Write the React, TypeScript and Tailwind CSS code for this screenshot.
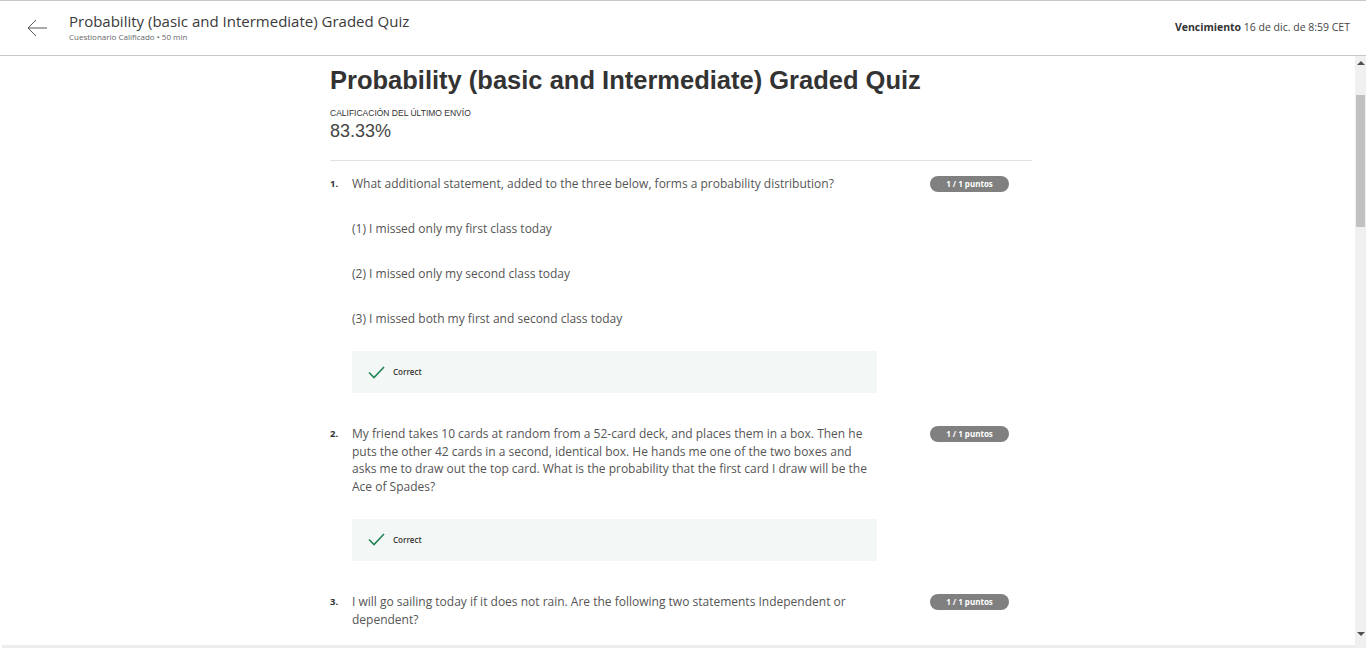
import React from 'react';

const questions = [
  {
    n: '1.',
    text: 'What additional statement, added to the three below, forms a probability distribution?',
    options: [
      '(1) I missed only my first class today',
      '(2) I missed only my second class today',
      '(3) I missed both my first and second class today',
    ],
    correct: true,
  },
  {
    n: '2.',
    text: 'My friend takes 10 cards at random from a 52-card deck, and places them in a box. Then he puts the other 42 cards in a second, identical box. He hands me one of the two boxes and asks me to draw out the top card. What is the probability that the first card I draw will be the Ace of Spades?',
    options: [],
    correct: true,
  },
  {
    n: '3.',
    text: 'I will go sailing today if it does not rain. Are the following two statements Independent or dependent?',
    options: [],
    correct: false,
  },
];

function CheckIcon() {
  return (
    <svg width="17" height="13" viewBox="0 0 17 13" fill="none">
      <path d="M1 6.5 L6 11.5 L16 1" stroke="#1f8354" strokeWidth="1.6" />
    </svg>
  );
}

function Badge() {
  return (
    <span className="flex items-center justify-center w-[79px] h-[16px] rounded-full bg-[#808080] text-white text-[8px] leading-none font-bold font-['Open_Sans',sans-serif]">
      1 / 1 puntos
    </span>
  );
}

export default function App() {
  return (
    <div className="w-[1366px] h-[648px] overflow-hidden bg-white flex flex-col font-['Open_Sans',sans-serif] text-[#555]">
      {/* header */}
      <header className="h-[56px] shrink-0 border-t border-b border-[#c8c8c8] flex items-center">
        <svg className="ml-[27px]" width="21" height="18" viewBox="0 0 21 18" fill="none">
          <path d="M1 9 H20 M9 1 L1 9 L9 17" stroke="#555" strokeWidth="1" />
        </svg>
        <div className="ml-[21px] flex flex-col -mt-[2px]">
          <span className="text-[15px] leading-[19px] text-[#3a3a3a]">Probability (basic and Intermediate) Graded Quiz</span>
          <span className="text-[8px] leading-[11px] text-[#666]">Cuestionario Calificado • 50 min</span>
        </div>
        <div className="ml-auto mr-[16px] text-[10.5px] text-[#444]">
          <span className="font-bold text-[#333]">Vencimiento</span> 16 de dic. de 8:59 CET
        </div>
      </header>

      <div className="flex flex-1 min-h-0">
        <main className="flex-1 min-w-0 overflow-hidden flex flex-col">
          <div className="flex-1 min-h-0 overflow-hidden">
            <div className="ml-[330px] w-[702px] pt-[9px]">
              <h1 className="font-['Liberation_Sans',Arial,sans-serif] font-bold text-[25.5px] leading-[30px] text-[#333]">
                Probability (basic and Intermediate) Graded Quiz
              </h1>
              <div className="mt-[13px] font-['Liberation_Sans',Arial,sans-serif] text-[8.5px] leading-[10px] text-[#333]">
                CALIFICACIÓN DEL ÚLTIMO ENVÍO
              </div>
              <div className="mt-[2px] font-['Liberation_Sans',Arial,sans-serif] text-[18px] leading-[22px] text-[#444]">83.33%</div>
              <div className="mt-[18px] border-t border-[#e2e2e2]" />

              <div className="pt-[14px]">
                {questions.map((q, i) => (
                  <div key={i} className={i === 0 ? '' : 'mt-[32px]'}>
                    <div className="flex items-start">
                      <span className="w-[22px] shrink-0 text-[9.5px] font-bold leading-[18px] text-[#333]">{q.n}</span>
                      <p className="w-[525px] text-[12px] leading-[17.7px] text-[#555]">{q.text}</p>
                      <div className="ml-[53px] pt-[1px] flex">
                        <Badge />
                      </div>
                    </div>
                    {q.options.length > 0 && (
                      <div className="ml-[22px] mt-[27px] flex flex-col gap-[27px]">
                        {q.options.map((o, j) => (
                          <p key={j} className="text-[12px] leading-[18px] text-[#555]">{o}</p>
                        ))}
                      </div>
                    )}
                    {q.correct && (
                      <div className="ml-[22px] mt-[23px] w-[525px] h-[42px] bg-[#f3f8f6] flex items-center pl-[16px]">
                        <CheckIcon />
                        <span className="ml-[8px] text-[8px] font-semibold text-[#333]">Correct</span>
                      </div>
                    )}
                  </div>
                ))}
              </div>
            </div>
          </div>
          <div className="h-[3px] shrink-0 ml-[2px] bg-[#ededed]" />
        </main>

        {/* scrollbar */}
        <div className="w-[11px] shrink-0 bg-[#f0f0f0] flex flex-col items-center">
          <div className="h-[14px] flex items-center justify-center">
            <div className="w-0 h-0 border-l-[4px] border-r-[4px] border-b-[4px] border-l-transparent border-r-transparent border-b-[#505050]" />
          </div>
          <div className="mt-[25px] w-[9px] h-[132px] bg-[#c1c1c1]" />
          <div className="flex-1" />
          <div className="h-[20px] flex items-start justify-center pt-[4px]">
            <div className="w-0 h-0 border-l-[4px] border-r-[4px] border-t-[4px] border-l-transparent border-r-transparent border-t-[#505050]" />
          </div>
        </div>
      </div>
    </div>
  );
}
